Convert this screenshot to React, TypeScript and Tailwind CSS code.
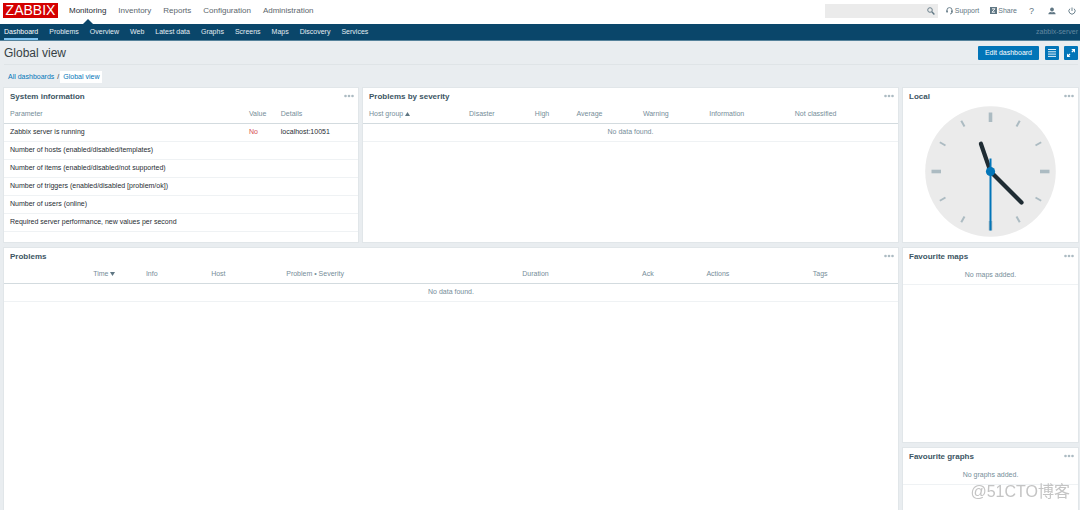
import React from 'react';

const mainMenu = ['Monitoring', 'Inventory', 'Reports', 'Configuration', 'Administration'];

const subMenu = [
  'Dashboard',
  'Problems',
  'Overview',
  'Web',
  'Latest data',
  'Graphs',
  'Screens',
  'Maps',
  'Discovery',
  'Services',
];

const systemInfo = [
  { parameter: 'Zabbix server is running', value: 'No', details: 'localhost:10051' },
  { parameter: 'Number of hosts (enabled/disabled/templates)', value: '', details: '' },
  { parameter: 'Number of items (enabled/disabled/not supported)', value: '', details: '' },
  { parameter: 'Number of triggers (enabled/disabled [problem/ok])', value: '', details: '' },
  { parameter: 'Number of users (online)', value: '', details: '' },
  { parameter: 'Required server performance, new values per second', value: '', details: '' },
];

type Column = { label: string; width: string; sort?: 'asc' | 'desc' };

const severityColumns: Column[] = [
  { label: 'Host group', width: 'w-[18.7%]', sort: 'asc' },
  { label: 'Disaster', width: 'w-[12.3%]' },
  { label: 'High', width: 'w-[7.8%]' },
  { label: 'Average', width: 'w-[12.4%]' },
  { label: 'Warning', width: 'w-[12.4%]' },
  { label: 'Information', width: 'w-[16%]' },
  { label: 'Not classified', width: 'w-auto' },
];

const problemColumns: Column[] = [
  { label: '', width: 'w-[9.3%]' },
  { label: 'Time', width: 'w-[5.9%]', sort: 'desc' },
  { label: 'Info', width: 'w-[7.3%]' },
  { label: 'Host', width: 'w-[8.4%]' },
  { label: 'Problem • Severity', width: 'w-[26.4%]' },
  { label: 'Duration', width: 'w-[13.4%]' },
  { label: 'Ack', width: 'w-[7.2%]' },
  { label: 'Actions', width: 'w-[11.9%]' },
  { label: 'Tags', width: 'w-auto' },
];

const thClass = 'h-[17px] px-1.5 text-left font-normal text-[#768d99] whitespace-nowrap';
const tdClass = 'h-[18px] px-1.5 border-b border-[#eff2f4]';

const SortArrow: React.FC<{ dir: 'asc' | 'desc' }> = ({ dir }) => (
  <svg className="inline-block ml-0.5" width="5" height="4" viewBox="0 0 5 4" fill="#5f7683">
    <path d={dir === 'asc' ? 'M0 4L2.5 0L5 4Z' : 'M0 0L2.5 4L5 0Z'} />
  </svg>
);

const Widget: React.FC<{ title: string; className?: string; children: React.ReactNode }> = ({
  title,
  className = '',
  children,
}) => (
  <section className={`flex flex-col bg-white outline outline-[#e1e6e9] ${className}`}>
    <header className="h-[18px] shrink-0 flex items-center justify-between pl-1.5 pr-1">
      <h2 className="text-[8px] leading-[10px] font-bold text-[#3c5563]">{title}</h2>
      <button type="button" aria-label={`${title} options`} className="pb-0.5 cursor-pointer">
        <svg width="10" height="4" viewBox="0 0 10 4" fill="#acbbc2">
          <circle cx="1.5" cy="2" r="1.3" />
          <circle cx="5" cy="2" r="1.3" />
          <circle cx="8.5" cy="2" r="1.3" />
        </svg>
      </button>
    </header>
    {children}
  </section>
);

const EmptyTable: React.FC<{ columns: Column[] }> = ({ columns }) => (
  <table className="w-full table-fixed">
    <thead>
      <tr className="border-b border-[#d3dbdf]">
        {columns.map((col) => (
          <th key={col.label} className={`${thClass} ${col.width}`}>
            {col.label}
            {col.sort && <SortArrow dir={col.sort} />}
          </th>
        ))}
      </tr>
    </thead>
    <tbody>
      <tr>
        <td colSpan={columns.length} className={`${tdClass} text-center text-[#768d99]`}>
          No data found.
        </td>
      </tr>
    </tbody>
  </table>
);

const Clock: React.FC = () => (
  <svg className="mx-auto w-[131px] h-[131px]" viewBox="-65.5 -65.5 131 131" role="img" aria-label="Local time">
    <circle r="65.3" fill="#ebebeb" />
    {[0, 30, 60, 90, 120, 150, 180, 210, 240, 270, 300, 330].map((deg) => {
      const major = deg % 90 === 0;
      return (
        <line
          key={deg}
          y1={major ? -49.5 : -52}
          y2={major ? -59 : -58.5}
          stroke="#acbbc2"
          strokeWidth={major ? 3.6 : 2}
          transform={`rotate(${deg})`}
        />
      );
    })}
    <g stroke="#1f2c33" strokeWidth="4.2" strokeLinecap="round">
      <line x2="-9.6" y2="-27.8" />
      <line x2="31" y2="31" />
    </g>
    <line y1="-13" y2="59" stroke="#0275b8" strokeWidth="2" />
    <circle r="4.6" fill="#0275b8" />
  </svg>
);

const Header: React.FC = () => (
  <header className="h-6 flex items-center justify-between pl-[3px] pr-1 bg-white text-[#5f7683]">
    <div className="flex items-center h-full">
      <a href="#" className="w-[55px] h-[15px] mr-[11px] mb-[3px] bg-[#d40000] text-white text-[14px] leading-[15px] text-center">
        ZABBIX
      </a>
      <nav className="flex h-full gap-3 text-[8px] leading-[21px] text-[#5b666c]">
        {mainMenu.map((item, i) => (
          <a key={item} href="#" className={i === 0 ? 'relative text-[#1f2c33]' : 'hover:text-[#1f2c33]'}>
            {item}
            {i === 0 && (
              <svg className="absolute bottom-0 left-1/2 -translate-x-1/2" width="10" height="5" viewBox="0 0 10 5" fill="#0a466a">
                <path d="M0 5L5 0L10 5Z" />
              </svg>
            )}
          </a>
        ))}
      </nav>
    </div>
    <div className="flex items-center mb-[3px]">
      <form className="relative flex mr-2">
        <input type="text" aria-label="Search" className="w-[113px] h-3.5 pl-1 pr-4 bg-[#ebebeb] outline-none" />
        <button type="submit" aria-label="Search" className="absolute right-[3px] top-[3px] cursor-pointer">
          <svg width="8" height="8" viewBox="0 0 8 8" fill="none" stroke="#5f7683">
            <circle cx="3" cy="3" r="2.3" strokeWidth=".9" />
            <path d="M4.8 4.8L7.4 7.4" strokeWidth="1.4" />
          </svg>
        </button>
      </form>
      <a href="#" className="flex items-center gap-0.5 mr-[11px]">
        <svg width="7" height="8" viewBox="0 0 7 8" fill="none" stroke="#5f7683">
          <path d="M.9 5V3.2A2.6 2.6 0 0 1 6.1 3.2V5.2Q6.1 6.9 4 7" strokeWidth=".9" />
          <path d="M1.1 3.4V5.6M5.8 3.4V5.6" strokeWidth="1.4" />
        </svg>
        Support
      </a>
      <a href="#" className="flex items-center gap-px mr-3">
        <svg width="7" height="7" viewBox="0 0 7 7">
          <rect width="7" height="7" fill="#5f7683" />
          <path d="M2 1.8H5L2 5.2H5" fill="none" stroke="#fff" strokeWidth=".9" />
        </svg>
        Share
      </a>
      <a href="#" className="mr-3.5 text-[9px] leading-[8px]">
        ?
      </a>
      <a href="#" aria-label="User profile" className="mr-3">
        <svg width="8" height="8" viewBox="0 0 8 8" fill="#5f7683">
          <path d="M4 .4C5.2.4 5.8 1.2 5.8 2.3C5.8 3.6 5.1 4.6 4 4.6S2.2 3.6 2.2 2.3C2.2 1.2 2.8.4 4 .4Z" />
          <path d="M.4 7.2C.4 5.7 1.6 5.2 2.8 5L4 5.5L5.2 5C6.4 5.2 7.6 5.7 7.6 7.2Z" />
        </svg>
      </a>
      <a href="#" aria-label="Sign out">
        <svg width="8" height="8" viewBox="0 0 8 8" fill="none" stroke="#5f7683">
          <path d="M1.9 1.7A3.1 3.1 0 1 0 6.1 1.7M4 .5V4" strokeWidth=".9" />
        </svg>
      </a>
    </div>
  </header>
);

const App: React.FC = () => {
  return (
    <div className="min-h-screen flex flex-col bg-[#e9edf0] font-['Liberation_Sans',Arial,sans-serif] text-[7px] leading-[8px] text-[#1f2c33]">
      <Header />

      <nav className="h-[17px] flex items-center justify-between pl-1 pr-0.5 bg-[#0a466a] border-b border-[#55829b]">
        <div className="flex h-full gap-[11px] leading-[15px] text-[#e4edf2]">
          {subMenu.map((item, i) => (
            <a
              key={item}
              href="#"
              className={i === 0 ? 'border-b-2 border-[#7fc3f0] text-white' : 'hover:text-white'}
            >
              {item}
            </a>
          ))}
        </div>
        <span className="text-[#6288a0]">zabbix-server</span>
      </nav>

      <div className="h-6 flex items-center justify-between ml-1 mr-0.5 border-b border-[#dfe4e7]">
        <h1 className="text-[12px] leading-[14px] text-[#363f45]">Global view</h1>
        <div className="flex gap-[5px]">
          <button type="button" className="h-3.5 px-[7px] mr-px bg-[#0275b8] text-white rounded-[1px] cursor-pointer">
            Edit dashboard
          </button>
          <button type="button" aria-label="Menu" className="size-3.5 flex items-center justify-center bg-[#0275b8] rounded-[1px] cursor-pointer">
            <svg width="8" height="8" viewBox="0 0 8 8" stroke="#fff">
              <path d="M0 .5H8M0 2.8H8M0 5.1H8M0 7.4H8" strokeWidth=".9" />
            </svg>
          </button>
          <button type="button" aria-label="Fullscreen" className="size-3.5 flex items-center justify-center bg-[#0275b8] rounded-[1px] cursor-pointer">
            <svg width="8" height="8" viewBox="0 0 8 8" fill="#fff" stroke="#fff">
              <path d="M4.3 0H8V3.7ZM0 4.6V8H3.4Z" stroke="none" />
              <path d="M4.8 3.2L7 1M3 5L1 7" strokeWidth="1.2" />
            </svg>
          </button>
        </div>
      </div>

      <nav aria-label="Breadcrumb" className="flex items-center gap-[3px] px-2 pt-1.5 pb-[5px] text-[#0275b8]">
        <a href="#">All dashboards</a>
        <span className="text-[#1f2c33]">/</span>
        <a href="#" className="-ml-0.5 px-[3px] leading-3 bg-white">
          Global view
        </a>
      </nav>

      <main className="flex-1 grid grid-cols-[354fr_535fr_175fr] grid-rows-[154px_194px_1fr] gap-x-[5px] gap-y-1.5 pl-1 pr-0.5">
        <Widget title="System information">
          <table className="w-full table-fixed">
            <thead>
              <tr className="border-b border-[#d3dbdf]">
                <th className={`${thClass} w-[67.5%]`}>Parameter</th>
                <th className={`${thClass} w-[9%]`}>Value</th>
                <th className={thClass}>Details</th>
              </tr>
            </thead>
            <tbody>
              {systemInfo.map((row) => (
                <tr key={row.parameter}>
                  <td className={tdClass}>{row.parameter}</td>
                  <td className={`${tdClass} text-[#d64e4e]`}>{row.value}</td>
                  <td className={tdClass}>{row.details}</td>
                </tr>
              ))}
            </tbody>
          </table>
        </Widget>

        <Widget title="Problems by severity">
          <EmptyTable columns={severityColumns} />
        </Widget>

        <Widget title="Local">
          <Clock />
        </Widget>

        <Widget title="Problems" className="col-span-2 row-span-2">
          <EmptyTable columns={problemColumns} />
        </Widget>

        <Widget title="Favourite maps">
          <p className="py-[5px] text-center text-[#768d99] border-b border-[#eff2f4]">No maps added.</p>
        </Widget>

        <Widget title="Favourite graphs">
          <p className="py-[5px] text-center text-[#768d99] border-b border-[#eff2f4]">No graphs added.</p>
        </Widget>
      </main>

      <div className="fixed right-2.5 bottom-2 text-[16px] leading-5 text-[#c4c4c4] font-['Liberation_Sans','Noto_Sans_CJK_SC',sans-serif] pointer-events-none">
        @51CTO博客
      </div>
    </div>
  );
};

export default App;
